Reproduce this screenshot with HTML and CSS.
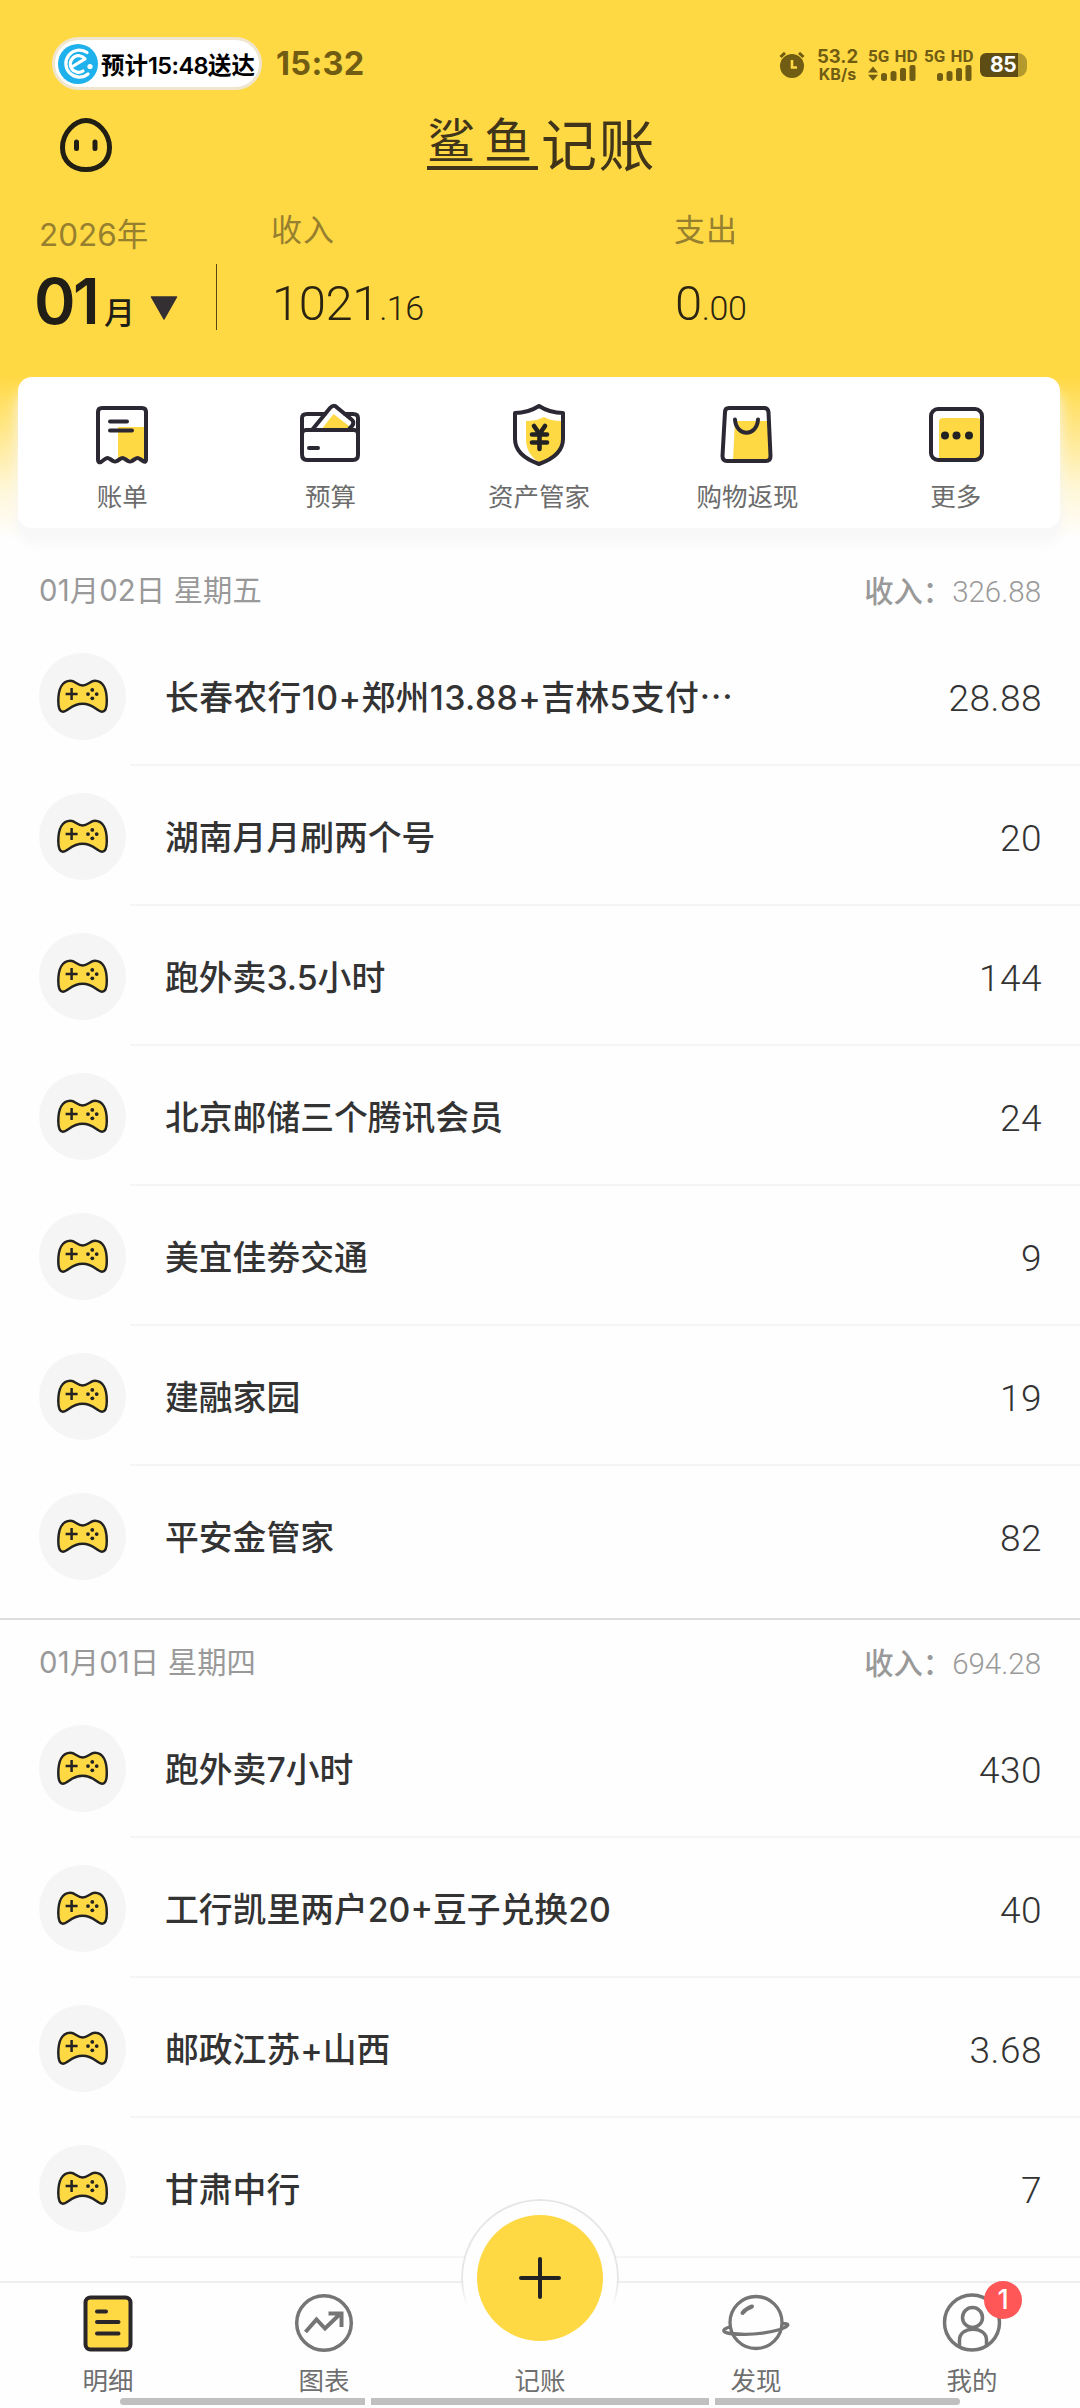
FILE: index.html
```html
<!DOCTYPE html>
<html lang="zh-CN">
<head>
<meta charset="utf-8">
<title>鲨鱼记账</title>
<link rel="stylesheet" href="styles.css">
</head>
<body>
<svg class="defs" width="0" height="0">
  <symbol id="pad" viewBox="0 0 87 87">
    <path d="M31.5 27.8C36 27.8 38.5 32.4 43.6 32.4S51.500 27.800 55.800 27.800C64 27.800 67.800 36 67.800 48C67.800 54 67 58.700 63.300 58.700C58.500 58.700 54.500 50.700 43.600 50.700S28.500 58.700 23.800 58.700C20.200 58.700 19.300 54 19.300 48C19.300 36 23.300 27.800 31.500 27.800Z" fill="#ffd944" stroke="#222" stroke-width="2.500" stroke-linejoin="round"/>
    <path d="M26.600 41h12M32.600 35v12" stroke="#222" stroke-width="2.500"/>
    <g fill="#222"><circle cx="53.300" cy="36.900" r="1.900"/><circle cx="53.300" cy="45.300" r="1.900"/><circle cx="49" cy="41.100" r="1.900"/><circle cx="57.700" cy="41.100" r="1.900"/></g>
  </symbol>
</svg>
<div class="screen">
  <header class="header">
    <div class="status">
      <div class="pill">
        <svg width="40" height="40" viewBox="0 0 40 40"><circle cx="20" cy="20" r="20" fill="#1fb1ec"/><path d="M29 8.500A13.500 13.500 0 1 0 30 30" fill="none" stroke="#fff" stroke-width="3.200" stroke-linecap="round"/><path d="M14.500 22.500L27 14.800A8.300 8.300 0 1 0 25 27" fill="none" stroke="#fff" stroke-width="3.200" stroke-linecap="round" stroke-linejoin="round"/><circle cx="32" cy="22.500" r="2.600" fill="#fff"/></svg>
        <span>预计<b>15:48</b>送达</span>
      </div>
      <span class="clock">15:32</span>
      <div class="status-right">
        <svg class="alarm" width="26" height="28" viewBox="0 0 26 28"><circle cx="13" cy="15" r="12" fill="#705c12"/><path d="M1.500 6L6 1.800M24.500 6L20 1.800" stroke="#705c12" stroke-width="3"/><path d="M13 9v7.500h5" fill="none" stroke="#ffd944" stroke-width="2.600"/></svg>
        <div class="speed"><span>53.2</span><span>KB/s</span></div>
        <div class="sim"><span>5G HD</span>
          <svg width="48" height="17" viewBox="0 0 48 17" fill="#705c12"><path d="M0 7.500L5 1.500 10 7.500ZM0 9.800L5 15.800 10 9.800Z"/><rect x="13" y="8" width="6" height="8" rx="2.500"/><rect x="22.500" y="6" width="6" height="10" rx="2.500"/><rect x="32" y="3" width="6" height="13" rx="2"/><rect x="41.500" y="0" width="6" height="16" rx="2"/></svg></div>
        <div class="sim"><span>5G HD</span>
          <svg width="48" height="17" viewBox="0 0 48 17" fill="#705c12"><rect x="13" y="8" width="6" height="8" rx="2.500"/><rect x="22.500" y="6" width="6" height="10" rx="2.500"/><rect x="32" y="3" width="6" height="13" rx="2"/><rect x="41.500" y="0" width="6" height="16" rx="2"/></svg></div>
        <div class="battery"><span>85</span></div>
      </div>
    </div>
    <div class="titlebar">
      <svg width="54" height="56" viewBox="0 0 54 56"><path d="M27 3.500C38 3.500 50.500 15.500 50.500 30.500C50.500 44 40.500 52.500 27 52.500S3.500 44 3.500 30.500C3.500 15.500 16 3.500 27 3.500Z" fill="none" stroke="#211e13" stroke-width="5"/><path d="M17.500 25v6.500M36 25v6.500" stroke="#211e13" stroke-width="5" stroke-linecap="round"/></svg>
      <h1><span class="shark">鲨鱼</span><span>记账</span></h1>
      <i></i>
    </div>
    <div class="summary">
      <div class="month">
        <div class="label year">2026年</div>
        <div class="month-value"><strong>01</strong><span>月</span>
          <svg width="28" height="24" viewBox="0 0 28 24"><path d="M1.500 1h25L14 23Z" fill="#332f33" stroke="#332f33" stroke-width="1.500" stroke-linejoin="round"/></svg></div>
      </div>
      <div class="rule"></div>
      <div class="total"><div class="label">收入</div><div class="sum">1021<small>.16</small></div></div>
      <div class="total"><div class="label">支出</div><div class="sum">0<small>.00</small></div></div>
    </div>
  </header>

  <nav class="tools">
    <a><svg width="64" height="64" viewBox="0 0 64 64"><path d="M28 24h26v33l-6-3-6 3-7-3-7 2Z" fill="#ffd944"/><path d="M8 57V9q0-4 4-4H52q4 0 4 4V57q0 3-3 1l-3-2q-2.500-2-5 0l-3 2q-2 1-4 0l-3-2q-2.500-2-5 0l-3 2q-2 1-4 0l-3-2q-2.500-2-5 0l-4 3q-3 1-3-2Z" fill="none" stroke="#2c2833" stroke-width="4" stroke-linejoin="round"/><path d="M20 18.500h17M20 27.500h22" stroke="#2c2833" stroke-width="4" stroke-linecap="round"/></svg><span>账单</span></a>
    <a><svg width="64" height="64" viewBox="0 0 64 64"><path d="M22 27L34.500 11L50 23L48 27Z" fill="#ffd944"/><path d="M13 27L31 5Q34.500 1 38 4.500L52 16Q56 19 53 23L50 26" fill="none" stroke="#2c2833" stroke-width="4"/><path d="M26 11H8Q3 11 3 15V51Q3 57 8 57H54Q59 57 59 52V15Q59 11 54 11H46M3 31Q3 27 7 27H55Q59 27 59 31M10 45h9" fill="none" stroke="#2c2833" stroke-width="4" stroke-linecap="round"/></svg><span>预算</span></a>
    <a><svg width="64" height="64" viewBox="0 0 64 64"><path d="M19 18Q30 18 37 14Q43 18 55 18V37C55 47 44 56 34 60C25 56 19 47 19 37Z" fill="#ffd944"/><path d="M32 3Q43 10 56 10V36C56 48 46 56 32 61C18 56 8 48 8 36V10Q21 10 32 3Z" fill="none" stroke="#2c2833" stroke-width="4" stroke-linejoin="round"/><path d="M27 23l5.500 8 5.500-8M32.500 31v15M25 31.500h15M25 39.500h15" fill="none" stroke="#222" stroke-width="4.600" stroke-linecap="round"/></svg><span>资产管家</span></a>
    <a><svg width="64" height="64" viewBox="0 0 64 64"><path d="M20 18H53L55 57H18Z" fill="#ffd944"/><path d="M14 5H49Q53 5 53.500 9L55.500 53Q55.500 58 51 58H12Q7.500 58 7.500 53L10 9Q10 5 14 5Z" fill="none" stroke="#2c2833" stroke-width="4"/><path d="M20 16.500C21 34 42 34 43 16.500" fill="none" stroke="#2c2833" stroke-width="4" stroke-linecap="round"/></svg><span>购物返现</span></a>
    <a><svg width="64" height="64" viewBox="0 0 64 64"><rect x="15" y="15" width="42" height="43" rx="4" fill="#ffd944"/><rect x="7" y="6" width="51" height="51" rx="7" fill="none" stroke="#2c2833" stroke-width="4"/><g fill="#222"><circle cx="21" cy="32.500" r="4"/><circle cx="32.500" cy="32.500" r="4"/><circle cx="45" cy="32.500" r="4"/></g></svg><span>更多</span></a>
  </nav>

  <main class="ledger">
    <section class="day first">
      <div class="day-head"><span>01月02日 星期五</span><span class="income">收入：<em>326.88</em></span></div>
      <div class="row"><svg><use href="#pad"/></svg><div class="long">长春农行10+郑州13.88+吉林5支付<span class="dots">…</span></div><em>28.88</em></div>
      <div class="row"><svg><use href="#pad"/></svg><div>湖南月月刷两个号</div><em>20</em></div>
      <div class="row"><svg><use href="#pad"/></svg><div>跑外卖3.5小时</div><em>144</em></div>
      <div class="row"><svg><use href="#pad"/></svg><div>北京邮储三个腾讯会员</div><em>24</em></div>
      <div class="row"><svg><use href="#pad"/></svg><div>美宜佳劵交通</div><em>9</em></div>
      <div class="row"><svg><use href="#pad"/></svg><div>建融家园</div><em>19</em></div>
      <div class="row last"><svg><use href="#pad"/></svg><div>平安金管家</div><em>82</em></div>
    </section>
    <section class="day">
      <div class="day-head"><span>01月01日 星期四</span><span class="income">收入：<em>694.28</em></span></div>
      <div class="row"><svg><use href="#pad"/></svg><div>跑外卖7小时</div><em>430</em></div>
      <div class="row"><svg><use href="#pad"/></svg><div>工行凯里两户20+豆子兑换20</div><em>40</em></div>
      <div class="row"><svg><use href="#pad"/></svg><div>邮政江苏+山西</div><em>3.68</em></div>
      <div class="row"><svg><use href="#pad"/></svg><div>甘肃中行</div><em>7</em></div>
    </section>
  </main>

  <nav class="tabbar">
    <a><svg width="68" height="64" viewBox="0 0 68 64"><rect x="11.500" y="6.500" width="45" height="52" rx="5" fill="#ffd944" stroke="#2a2629" stroke-width="4"/><path d="M23 20.500h9M23 31h21.500M23 42.500h21.500" stroke="#2a2629" stroke-width="4" stroke-linecap="round"/></svg><span>明细</span></a>
    <a><svg width="68" height="64" viewBox="0 0 68 64" fill="none" stroke="#757575"><circle cx="34" cy="32" r="27.300" stroke-width="3.500"/><path d="M15.500 41L26.500 28.500 35 37.500 50 23M38.500 22.500h13V36" stroke-width="4"/></svg><span>图表</span></a>
    <a class="add"><span>记账</span></a>
    <a><svg width="68" height="64" viewBox="0 0 68 64" fill="none" stroke="#757575" stroke-width="3.300"><circle cx="34" cy="31.500" r="26"/><path d="M9 35.500C-1 38 0 41.500 8 42.500C26 44.500 42 43 58 38.500C68 35 68 32.500 60 32.500"/><path d="M20.500 22Q24 17.500 30 15.500" stroke-width="4" stroke-linecap="round"/></svg><span>发现</span></a>
    <a><svg width="68" height="64" viewBox="0 0 68 64" fill="none" stroke="#757575" stroke-width="3.500"><circle cx="34" cy="31.500" r="27.500"/><circle cx="34.500" cy="26.500" r="10"/><path d="M21.500 56V49C21.500 34.500 48.500 34.500 48.500 49V54"/></svg><span>我的</span><b class="badge">1</b></a>
    <div class="fab-ring"></div>
    <div class="fab"><svg width="44" height="44" viewBox="0 0 44 44"><path d="M3 22h38M22 3v38" stroke="#222" stroke-width="4" stroke-linecap="round"/></svg></div>
    <div class="homebar"><i></i><i></i><i></i></div>
  </nav>
</div>
</body>
</html>
```
FILE: styles.css
```css
* { box-sizing: border-box; }
body { margin: 0; background: #fefefe; font-family: Inter, "Noto Sans CJK SC", sans-serif; color: #333; }
.defs { display: block; height: 0; }
svg { display: block; flex: none; }
em, i { font-style: normal; }
.screen { width: 1080px; height: 2408px; overflow: hidden; display: flex; flex-direction: column; background: linear-gradient(#ffd944 377px, #fff7d8 490px, #fefefe 540px); }

.header { height: 377px; flex: none; padding-top: 37px; }
.status { height: 53px; display: flex; align-items: center; padding: 0 53px 0 52px; color: #705c12; }
.pill { width: 210px; height: 53px; border: 3px solid #f0e6cf; border-radius: 27px; background: #fff; color: #000; display: flex; align-items: center; padding-left: 3px; gap: 3px; font-size: 23.500px; font-weight: 700; white-space: nowrap; }
.pill b { font-weight: 600; letter-spacing: -.6px; }
.clock { margin-left: 14px; font-size: 32.500px; font-weight: 700; letter-spacing: .3px; }
.status-right { margin-left: auto; display: flex; align-items: center; padding-top: 3px; font-weight: 700; }
.alarm { margin-right: 12px; }
.speed { width: 41px; margin-right: 10px; display: flex; flex-direction: column; align-items: center; font-size: 18.500px; line-height: 18px; }
.speed span:last-child { font-size: 16px; }
.sim { width: 48px; margin-right: 8px; font-family: Roboto, sans-serif; font-size: 17px; line-height: 17px; white-space: nowrap; }
.sim span { display: block; word-spacing: 1px; }
.battery { width: 47px; height: 24px; border-radius: 6px 9px 9px 6px; background: linear-gradient(90deg, #5d4d14 38px, #b49a2c 38px); color: #fff; font-size: 21px; line-height: 24px; padding-left: 10px; letter-spacing: -.5px; }
.titlebar { height: 56px; margin: 27px 60px 0; padding-left: 0; display: flex; align-items: center; justify-content: space-between; }
.titlebar i { width: 50px; }
.titlebar svg { margin-left: -1px; }
.titlebar h1 { margin: 0; display: flex; height: 56px; font-size: 56px; font-weight: 400; line-height: 58px; letter-spacing: 1.500px; color: #40351a; }
.titlebar .shark { width: 111px; height: 53px; border-bottom: 4px solid #40351a; font-size: 48px; line-height: 48px; letter-spacing: 9px; margin-right: 3px; white-space: nowrap; }
.summary { display: flex; padding-left: 34px; }
.label { font-size: 31px; line-height: 40px; color: #96802f; }
.month { width: 182px; padding-top: 42px; }
.year { padding-left: 5px; }
.month .year { font-size: 31.500px; }
.month-value { display: flex; align-items: baseline; color: #211e18; height: 70px; margin-top: 11px; }
.month-value strong { font-size: 63px; line-height: 70px; font-weight: 600; letter-spacing: -2.500px; width: 70px; }
.month-value span { font-size: 31px; font-weight: 500; width: 46px; }
.month-value svg { align-self: flex-start; margin-top: 30px; }
.rule { width: 1px; height: 66px; margin-top: 91px; background: #55461a; }
.total { width: 403px; padding: 37px 0 0 54px; }
.total .label { letter-spacing: 1px; }
.sum { font-family: Roboto, sans-serif; font-weight: 300; font-size: 49px; line-height: 56px; margin-top: 26px; padding-left: 1px; letter-spacing: -.4px; color: #2a2410; }
.sum small { font-size: 34px; }

.tools { margin: 0 20px 0 18px; height: 151px; flex: none; display: grid; grid-template-columns: repeat(5, 1fr); background: #fff; border-radius: 14px; box-shadow: 0 9px 0 #f8f8f8, 0 14px 14px #f6f6f6; }
.tools a { display: flex; flex-direction: column; align-items: center; padding-top: 26px; font-size: 25.500px; line-height: 34px; color: #6c6c6c; gap: 13px; }

.ledger { margin-top: 18px; flex: none; }
.day { border-top: 2px solid #dedede; }
.first { border-color: transparent; padding-bottom: 12px; }
.day-head { height: 78px; padding: 1px 39px 0 39px; display: flex; justify-content: space-between; align-items: center; font-size: 29.300px; color: #999; }
.day-head > span:first-child { letter-spacing: .15px; }
.income { font-weight: 500; padding-top: 3px; }
.day-head em { font: 300 29.500px Roboto, sans-serif; }
.row { height: 140px; display: grid; grid-template-columns: 87px 1fr auto; align-items: center; padding: 0 39px; column-gap: 39px; background: linear-gradient(#f5f5f5, #f5f5f5) 130px 100% / 100% 2px no-repeat; font-size: 33.800px; font-weight: 500; white-space: nowrap; }
.row > div { margin-top: -2px; }
.row .long { letter-spacing: .4px; }
.row svg { width: 87px; height: 87px; border-radius: 50%; background: #f5f5f5; }
.dots { font-family: "Noto Sans CJK SC", sans-serif; }
.row em { font: 300 37px Roboto, sans-serif; letter-spacing: .5px; padding-top: 4px; margin-right: -1px; }
.last { background: none; }
.day-head + .row { margin-top: -2px; height: 142px; padding-top: 2px; }

.tabbar { position: fixed; left: 0; top: 2281px; width: 1080px; height: 127px; border-top: 2px solid #eee; background: #fefefe; display: grid; grid-template-columns: repeat(5, 216px); }
.tabbar a { position: relative; display: flex; flex-direction: column; align-items: center; justify-content: flex-start; padding-top: 8px; gap: 9px; font-size: 25.500px; line-height: 34px; color: #6f6f6f; }
.tabbar .add { padding-top: 81px; }
.badge { position: absolute; left: 120px; top: -2px; width: 38px; height: 38px; border-radius: 50%; background: #ff5658; color: #fff; font-size: 27px; font-weight: 500; line-height: 38px; text-align: center; }
.fab-ring { position: absolute; left: 461px; top: -84px; width: 158px; height: 158px; border-radius: 50%; border: 2px solid #e6e6e6; background: #fefefe; -webkit-mask-image: linear-gradient(#000 85px, transparent 108px); mask-image: linear-gradient(#000 85px, transparent 108px); }
.fab { position: absolute; left: 477px; top: -68px; width: 126px; height: 126px; border-radius: 50%; background: #ffd944; display: grid; place-items: center; }
.homebar { position: absolute; left: 120px; top: 115px; width: 840px; height: 7px; display: grid; grid-template-columns: 245px 338px 245px; column-gap: 6px; border-radius: 4px; overflow: hidden; }
.homebar i { background: #c0c0c0; }
```
